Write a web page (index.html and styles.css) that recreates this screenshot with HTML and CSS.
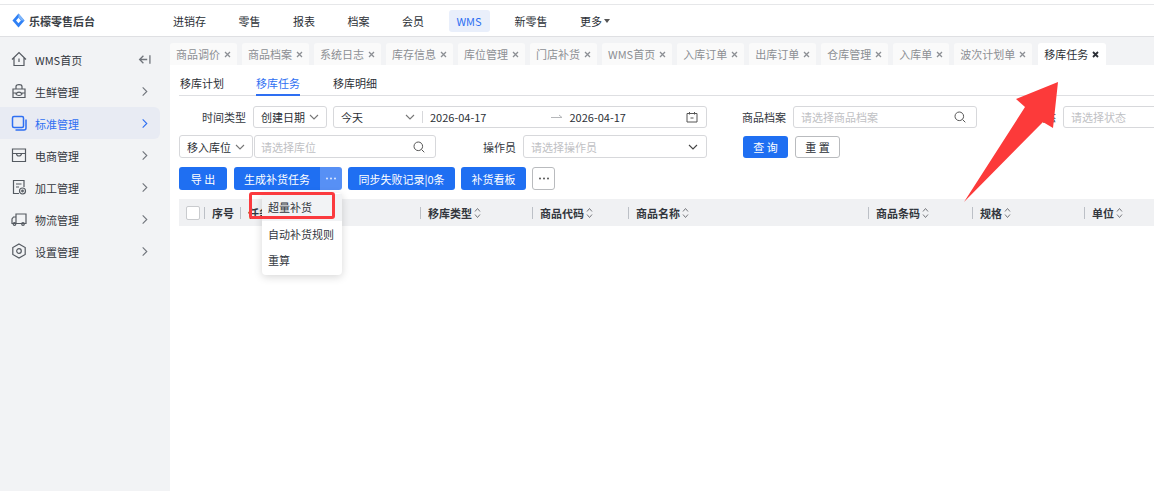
FILE: index.html
```html
<!DOCTYPE html>
<html lang="zh-CN">
<head>
<meta charset="utf-8">
<title>乐檬零售后台</title>
<link rel="stylesheet" href="styles.css">
</head>
<body>
<header class="topbar">
  <div class="brand">
    <svg class="logo" viewBox="0 0 14 16"><path d="M7 0.500 L13.500 8 L7 15.500 L0.500 8 Z" fill="#2f80f5"/><path d="M7 0.500 L13.500 8 L10.200 8 L7 4.500 Z" fill="#7fb6fa"/><path d="M7 5 L9.600 8 L7 11 L4.400 8 Z" fill="#fff"/></svg>
    <span>乐檬零售后台</span>
  </div>
  <nav class="topnav">
    <a>进销存</a><a>零售</a><a>报表</a><a>档案</a><a>会员</a><a class="on">WMS</a><a>新零售</a><a class="more">更多<i></i></a>
  </nav>
</header>
<div class="shell">
  <aside class="side">
    <div class="item">
      <svg viewBox="0 0 16 16"><path d="M1 8.500 L8 1.500 L15 8.500 M3 7 V14.500 H13 V7 M8 7.500 V11"/></svg>
      <span>WMS首页</span>
      <svg class="end wide" viewBox="0 0 12 12"><path d="M5 2.500 L1.500 6 L5 9.500 M1.500 6 H8.500 M11 2 V10"/></svg>
    </div>
    <div class="item">
      <svg viewBox="0 0 16 16"><path d="M2 6 H14 V14.500 H2 Z M5 6 V3.500 C5 1 11 1 11 3.500 V6 M2 10 H5 M11 10 H14 M5 11 C6 8.500 10 8.500 11 11 C10 13 6 13 5 11 Z"/></svg>
      <span>生鲜管理</span>
      <svg class="end" viewBox="0 0 12 12"><path d="M4 1.500 L8.500 6 L4 10.500"/></svg>
    </div>
    <div class="item active">
      <svg viewBox="0 0 16 16"><rect x="1.500" y="1.500" width="11" height="11" rx="1.500" stroke-width="1.500"/><path d="M15 4.500 V13 A2 2 0 0 1 13 15 H4.500" stroke-width="1.500"/></svg>
      <span>标准管理</span>
      <svg class="end" viewBox="0 0 12 12"><path d="M4 1.500 L8.500 6 L4 10.500"/></svg>
    </div>
    <div class="item">
      <svg viewBox="0 0 16 16"><path d="M1.500 2 H14.500 V14.500 H1.500 Z M1.500 6.500 H14.500 M5.500 6.500 A2.500 2.500 0 0 0 10.500 6.500"/></svg>
      <span>电商管理</span>
      <svg class="end" viewBox="0 0 12 12"><path d="M4 1.500 L8.500 6 L4 10.500"/></svg>
    </div>
    <div class="item">
      <svg viewBox="0 0 16 16"><path d="M8 14.500 H2.500 V1.500 H13 V8 M5 5 H10.500 M5 8 H8"/><circle cx="11.500" cy="12" r="3"/><circle cx="11.500" cy="12" r="0.800"/></svg>
      <span>加工管理</span>
      <svg class="end" viewBox="0 0 12 12"><path d="M4 1.500 L8.500 6 L4 10.500"/></svg>
    </div>
    <div class="item">
      <svg viewBox="0 0 16 16"><path d="M5 12.500 V3 H15 V12.500 H5 M5 6 H2.500 L1 8 V12.500 H5"/><circle cx="3.500" cy="13" r="1.300"/><circle cx="12" cy="13" r="1.300"/></svg>
      <span>物流管理</span>
      <svg class="end" viewBox="0 0 12 12"><path d="M4 1.500 L8.500 6 L4 10.500"/></svg>
    </div>
    <div class="item">
      <svg viewBox="0 0 16 16"><path d="M8 1 L14.200 4.500 V11.500 L8 15 L1.800 11.500 V4.500 Z"/><circle cx="8" cy="8" r="2.300"/></svg>
      <span>设置管理</span>
      <svg class="end" viewBox="0 0 12 12"><path d="M4 1.500 L8.500 6 L4 10.500"/></svg>
    </div>
  </aside>
  <main class="main">
    <div class="tabs">
      <div class="tab">商品调价<svg viewBox="0 0 7 7"><path d="M1 1 L6 6 M6 1 L1 6"/></svg></div>
      <div class="tab">商品档案<svg viewBox="0 0 7 7"><path d="M1 1 L6 6 M6 1 L1 6"/></svg></div>
      <div class="tab">系统日志<svg viewBox="0 0 7 7"><path d="M1 1 L6 6 M6 1 L1 6"/></svg></div>
      <div class="tab">库存信息<svg viewBox="0 0 7 7"><path d="M1 1 L6 6 M6 1 L1 6"/></svg></div>
      <div class="tab">库位管理<svg viewBox="0 0 7 7"><path d="M1 1 L6 6 M6 1 L1 6"/></svg></div>
      <div class="tab">门店补货<svg viewBox="0 0 7 7"><path d="M1 1 L6 6 M6 1 L1 6"/></svg></div>
      <div class="tab">WMS首页<svg viewBox="0 0 7 7"><path d="M1 1 L6 6 M6 1 L1 6"/></svg></div>
      <div class="tab">入库订单<svg viewBox="0 0 7 7"><path d="M1 1 L6 6 M6 1 L1 6"/></svg></div>
      <div class="tab">出库订单<svg viewBox="0 0 7 7"><path d="M1 1 L6 6 M6 1 L1 6"/></svg></div>
      <div class="tab">仓库管理<svg viewBox="0 0 7 7"><path d="M1 1 L6 6 M6 1 L1 6"/></svg></div>
      <div class="tab">入库单<svg viewBox="0 0 7 7"><path d="M1 1 L6 6 M6 1 L1 6"/></svg></div>
      <div class="tab">波次计划单<svg viewBox="0 0 7 7"><path d="M1 1 L6 6 M6 1 L1 6"/></svg></div>
      <div class="tab current">移库任务<svg viewBox="0 0 7 7"><path d="M1 1 L6 6 M6 1 L1 6"/></svg></div>
    </div>
    <div class="page">
      <div class="subtabs">
        <a>移库计划</a><a class="on">移库任务</a><a>移库明细</a>
      </div>
      <div class="row row1">
        <label class="lab lab-time">时间类型</label>
        <div class="field sel w-type"><span>创建日期</span><svg class="chev" viewBox="0 0 10 6"><path d="M1 1 L5 5 L9 1"/></svg></div>
        <div class="field range">
          <div class="today"><span>今天</span><svg class="chev" viewBox="0 0 10 6"><path d="M1 1 L5 5 L9 1"/></svg></div>
          <span class="date first">2026-04-17</span>
          <svg class="to" viewBox="0 0 12 6"><path d="M0 3.500 H11 M8 1 L11 3.500"/></svg>
          <span class="date">2026-04-17</span>
          <svg class="cal" viewBox="0 0 12 12"><path d="M1 2.500 H11 V11 H1 Z M3.500 1 V3.500 M8.500 1 V3.500 M4.500 7 H7.500"/></svg>
        </div>
        <label class="lab lab-goods">商品档案</label>
        <div class="field input w-goods"><span class="ph">请选择商品档案</span><svg class="search" viewBox="0 0 12 12"><circle cx="5.300" cy="5.300" r="4.300"/><path d="M8.500 8.500 L11.300 11.300"/></svg></div>
        <label class="lab lab-state">状态</label>
        <div class="field input w-state"><span class="ph">请选择状态</span></div>
      </div>
      <div class="row row2">
        <div class="field sel w-loc"><span>移入库位</span><svg class="chev" viewBox="0 0 10 6"><path d="M1 1 L5 5 L9 1"/></svg></div>
        <div class="field input w-locin"><span class="ph">请选择库位</span><svg class="search" viewBox="0 0 12 12"><circle cx="5.300" cy="5.300" r="4.300"/><path d="M8.500 8.500 L11.300 11.300"/></svg></div>
        <label class="lab lab-op">操作员</label>
        <div class="field input w-op"><span class="ph">请选择操作员</span><svg class="chev dark" viewBox="0 0 10 6"><path d="M1 1 L5 5 L9 1"/></svg></div>
        <button class="btn primary query">查 询</button>
        <button class="btn ghost reset">重 置</button>
      </div>
      <div class="row actions">
        <button class="btn primary export">导 出</button>
        <div class="split">
          <button class="btn primary gen">生成补货任务</button>
          <button class="btn dots-btn" aria-label="更多"><svg viewBox="0 0 12 3"><circle cx="2" cy="1.500" r="1"/><circle cx="6" cy="1.500" r="1"/><circle cx="10" cy="1.500" r="1"/></svg></button>
        </div>
        <button class="btn primary sync">同步失败记录|0条</button>
        <button class="btn primary board">补货看板</button>
        <button class="btn ghost more-btn" aria-label="更多"><svg viewBox="0 0 12 3"><circle cx="2" cy="1.500" r="1"/><circle cx="6" cy="1.500" r="1"/><circle cx="10" cy="1.500" r="1"/></svg></button>
      </div>
      <div class="thead">
        <div class="th c-check"><span class="box"></span></div>
        <div class="th c-no"><span>序号</span></div>
        <div class="th c-task"><span class="clip">任务</span></div>
        <div class="th c-type"><span>移库类型</span><svg class="sort" viewBox="0 0 7 12"><path d="M1 4.500 L3.500 1.500 L6 4.500 M1 7.500 L3.500 10.500 L6 7.500"/></svg></div>
        <div class="th c-code"><span>商品代码</span><svg class="sort" viewBox="0 0 7 12"><path d="M1 4.500 L3.500 1.500 L6 4.500 M1 7.500 L3.500 10.500 L6 7.500"/></svg></div>
        <div class="th c-name"><span>商品名称</span><svg class="sort" viewBox="0 0 7 12"><path d="M1 4.500 L3.500 1.500 L6 4.500 M1 7.500 L3.500 10.500 L6 7.500"/></svg></div>
        <div class="th c-bar"><span>商品条码</span><svg class="sort" viewBox="0 0 7 12"><path d="M1 4.500 L3.500 1.500 L6 4.500 M1 7.500 L3.500 10.500 L6 7.500"/></svg></div>
        <div class="th c-spec"><span>规格</span><svg class="sort" viewBox="0 0 7 12"><path d="M1 4.500 L3.500 1.500 L6 4.500 M1 7.500 L3.500 10.500 L6 7.500"/></svg></div>
        <div class="th c-unit"><span>单位</span><svg class="sort" viewBox="0 0 7 12"><path d="M1 4.500 L3.500 1.500 L6 4.500 M1 7.500 L3.500 10.500 L6 7.500"/></svg></div>
      </div>
    </div>
  </main>
</div>
<ul class="menu">
  <li class="hover">超量补货</li>
  <li>自动补货规则</li>
  <li>重算</li>
</ul>
<div class="redbox"></div>
<svg class="arrow" viewBox="0 0 100 125"><path d="M96 0 L54 17 L63 25 L2 120 L81 40 L91 46 Z" fill="#fc3a3a"/></svg>
</body>
</html>
```
FILE: styles.css
```css
* { box-sizing: border-box; }
html, body { margin: 0; padding: 0; height: 100%; overflow: hidden; }
body {
  width: 1154px; height: 491px; background: #fff; color: #2b2f36; position: relative;
  font: 11px/16px "Noto Sans CJK SC", "Noto Sans", sans-serif;
}
svg { display: block; flex: none; fill: none; stroke: currentColor; }
.topbar {
  height: 33px; margin-top: 4px; border-top: 1px solid #e6e7e9; border-bottom: 1px solid #dfe0e3;
  display: flex; align-items: center; background: #fff;
}
.brand { width: 173px; padding-left: 12px; display: flex; align-items: center; gap: 4px; font-weight: 700; color: #3b3f46; }
.logo { width: 13px; height: 15px; stroke: none; }
.topnav { display: flex; align-items: center; }
.topnav a { margin-right: 32.5px; white-space: nowrap; }
.topnav a.on {
  background: #e9effb; color: #2e6ff2; margin: 0 25px 0 -8px; height: 22px;
  line-height: 22px; border-radius: 3px; width: 41px; text-align: center;
}
.topnav .more { display: flex; align-items: center; gap: 2px; }
.topnav .more i { border: 3px solid transparent; border-top: 4px solid #555; border-bottom: 0; }
.shell { display: flex; height: 454px; }
.side { width: 170px; background: #f2f3f5; padding-top: 6px; flex: none; }
.item { height: 32px; display: flex; align-items: center; padding: 0 12px; color: #33373e; margin-right: 10px; border-radius: 0 6px 6px 0; }
.item > svg:first-child { width: 16px; height: 16px; color: #555a61; margin-right: 8px; stroke-width: 1.200; margin-left: -1px; }
.item span { position: relative; top: 1px; }
.item .end { width: 11px; height: 11px; margin-left: auto; color: #71757c; stroke-width: 1.200; margin-right: -2px; }
.item .end.wide { width: 13px; height: 13px; margin-right: -3px; }
.item.active { background: #e8ebf3; color: #2e6ff2; }
.item.active svg { color: #2e6ff2 !important; }
.main { flex: 1; min-width: 0; background: #fff; display: flex; flex-direction: column; }
.tabs { height: 28px; background: #f2f3f5; display: flex; gap: 5px; align-items: flex-end; flex: none; }
.tab {
  height: 22px; padding: 0 6px; background: #fafafa; color: #8c8f94; white-space: nowrap;
  border-radius: 3px 3px 0 0; display: flex; align-items: center; gap: 4px;
}
.tab svg { width: 7px; height: 7px; stroke-width: 1.300; }
.tab.current { background: #fff; color: #2b2f36; margin-left: 1px; padding-right: 7px; }
.tab.current svg { stroke-width: 1.800; }
.page { flex: 1; padding: 0 0 0 9px; min-width: 0; }
.subtabs { height: 31px; border-bottom: 1px solid #dedfe2; display: flex; align-items: flex-start; padding-top: 10px; }
.subtabs a { height: 21px; margin-left: 1px; margin-right: 31px; color: #2b2f36; }
.subtabs a.on { color: #2e6ff2; border-bottom: 2px solid #2e6ff2; margin-right: 32px; }
.row { display: flex; align-items: center; white-space: nowrap; }
.row1 { margin-top: 10px; height: 22px; }
.row2 { margin-top: 7px; height: 23px; }
.actions { margin-top: 9px; height: 23px; gap: 7px; }
.lab { color: #33373e; flex: none; }
.lab-time { margin-left: 23px; margin-right: 7px; }
.lab-goods { margin-left: 35px; margin-right: 7px; }
.lab-state { margin-left: 57px; margin-right: 6px; }
.lab-op { margin-left: 47px; margin-right: 7px; }
.field {
  height: 100%; border: 1px solid #d7d8db; border-radius: 3px; background: #fff; display: flex; align-items: center; padding: 0 7px; flex: none;
}
.sel { justify-content: space-between; }
.w-type { width: 74px; }
.range { width: 374px; margin-left: 6px; padding: 0; }
.today { width: 89px; height: 12px; border-right: 1px solid #d7d8db; padding: 0 7px; display: flex; align-items: center; justify-content: space-between; }
.date { color: #2b2f36; }
.date.first { margin-left: 7px; }
.to { width: 12px; height: 6px; color: #b5b7ba; margin: 0 6px 0 65px; }
.cal { width: 12px; height: 12px; margin-left: auto; margin-right: 8px; color: #555; }
.chev { width: 10px; height: 6px; color: #777; stroke-width: 1.100; }
.chev.dark { color: #444; margin-left: auto; margin-right: 1px; }
.ph { color: #bfc1c4; }
.search { width: 12px; height: 12px; color: #555; margin-left: auto; margin-right: 3px; }
.w-goods { width: 184px; }
.w-state { width: 120px; margin-left: 1px; }
.w-loc { width: 74px; }
.w-locin { width: 182px; margin-left: 1px; padding-left: 6px; }
.w-op { width: 184px; }
.btn {
  height: 23px; border: 0; border-radius: 3px; font: inherit; padding: 0; flex: none; white-space: nowrap;
  display: flex; align-items: center; justify-content: center;
}
.btn svg { width: 12px; height: 3px; fill: currentColor; stroke: none; }
.primary { background: #1f6ff2; color: #fff; }
.ghost { background: #fff; border: 1px solid #b9bbbe; color: #2b2f36; }
.query { width: 45px; margin-left: 36px; height: 22px; }
.reset { width: 45px; margin-left: 7px; height: 22px; }
.export { width: 48px; }
.split { display: flex; }
.gen { width: 86px; border-radius: 3px 0 0 3px; }
.dots-btn { width: 22px; background: #5790f5; color: #dfe9ff; border-radius: 0 3px 3px 0; }
.sync { width: 107px; margin-left: -1px; }
.board { width: 65px; margin-left: -1px; }
.more-btn { width: 23px; margin-left: -1px; color: #555; }
.thead { margin-top: 9px; height: 27px; background: #f0f1f3; display: flex; align-items: center; font-weight: 700; color: #33373e; }
.th { height: 12px; line-height: 12px; display: flex; align-items: center; gap: 2px; padding-left: 7px; border-left: 1px solid #bcc0c6; flex: none; white-space: nowrap; }
.c-check { border-left: 0; width: 25px; }
.box { width: 14px; height: 14px; background: #fff; border: 1px solid #c9cbce; border-radius: 2px; flex: none; }
.c-no { width: 36px; }
.c-task { width: 180px; }
.c-type { width: 112px; }
.c-code { width: 96px; }
.c-name { width: 240px; }
.c-bar { width: 104px; }
.c-spec { width: 112px; }
.c-unit { width: 70px; }
.clip { width: 14px; overflow: hidden; }
.sort { width: 7px; height: 12px; color: #77797e; stroke-width: 1; }
.menu {
  position: absolute; left: 262px; top: 193px; width: 80px; height: 82px; margin: 0; padding: 1px 0; list-style: none;
  background: #fff; border-radius: 4px; box-shadow: 0 2px 8px rgba(0,0,0,.16); color: #33373e;
}
.menu li { height: 26.5px; line-height: 26.5px; padding-left: 6px; white-space: nowrap; }
.menu li.hover { background: #f2f3f5; }
.redbox { position: absolute; left: 249px; top: 192px; width: 86px; height: 27px; border: 3px solid #fb3a3e; border-radius: 3px; }
.arrow { position: absolute; left: 962px; top: 82px; width: 100px; height: 125px; stroke: none; }
```
